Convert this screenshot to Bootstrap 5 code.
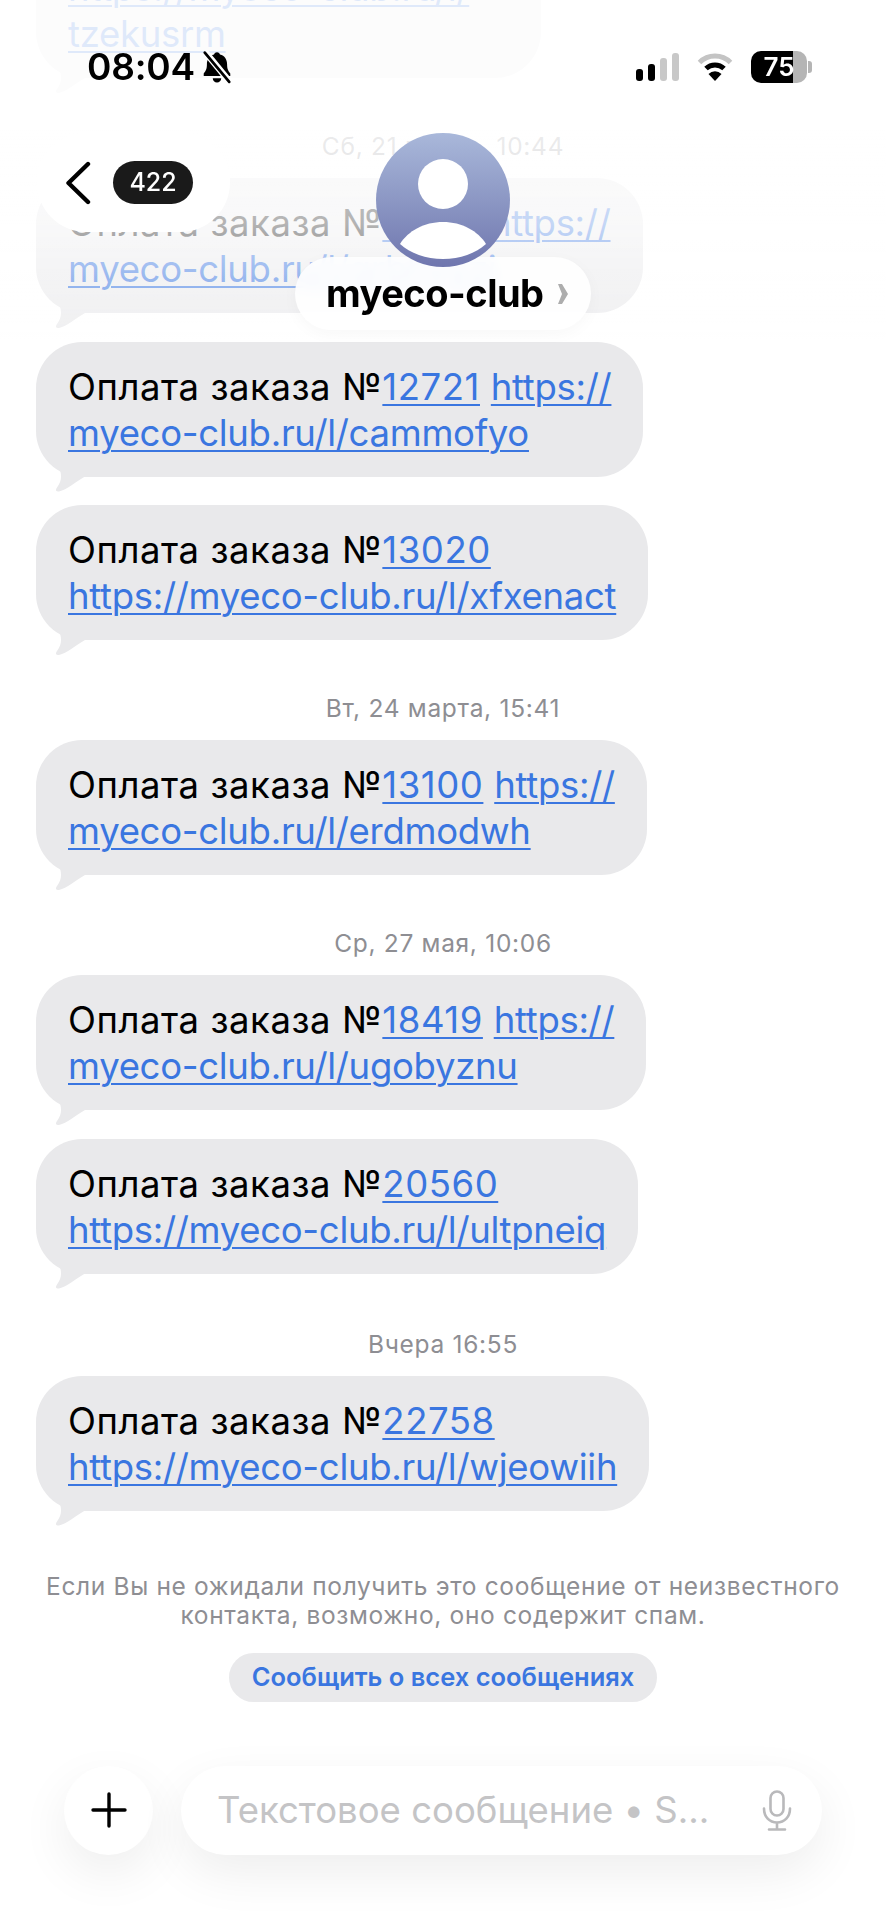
<!DOCTYPE html>
<html lang="ru">
<head>
  <meta charset="UTF-8" />
  <meta name="viewport" content="width=device-width, initial-scale=1.0" />
  <title>myeco-club</title>
  <link href="https://cdn.jsdelivr.net/npm/bootstrap@5.3.2/dist/css/bootstrap.min.css" rel="stylesheet" />
  <style>
    body {
      background-color: #fff;
      font-family: Inter, "Noto Sans", sans-serif;
      height: 1920px;
      overflow: hidden;
      color: #000;
    }

    .thread {
      margin-top: -103px;
      padding: 0 36px;
    }

    .sms {
      position: relative;
      background-color: #e9e9eb;
      border-radius: 46px;
      padding: 22px 32px 21px 32px;
      font-size: 36.5px;
      line-height: 46px;
      letter-spacing: 0.55px;
      white-space: nowrap;
      margin-bottom: 28.5px;
    }

    .sms::after {
      content: "";
      position: absolute;
      left: 15px;
      bottom: -16px;
      width: 40px;
      height: 27px;
      background-color: #e9e9eb;
      clip-path: path("M8 0 C10 8 12 14 6 22 C4 25 5 26 8 26 C16 24 24 17 34 11 L34 0 Z");
    }

    .sms a {
      color: #3a76e0;
      text-decoration: underline;
      text-underline-offset: 4px;
      text-decoration-thickness: 2px;
    }

    .sms a.url { letter-spacing: -0.3px; }

    .sms-wide { width: 505px; }

    .stamp {
      color: #8e8e93;
      font-size: 24.5px;
      letter-spacing: 0.7px;
      line-height: 32px;
      margin-top: 52px;
      margin-bottom: 16px;
    }

    .stamp-last { margin-top: 54px; }

    .notice {
      color: #8e8e93;
      font-size: 24.5px;
      line-height: 29px;
      margin-top: 61px;
      letter-spacing: 0.65px;
    }

    .report-btn {
      background-color: #e9e9eb;
      color: #3a76e0;
      font-size: 25.5px;
      font-weight: 600;
      height: 49px;
      width: 428px;
      padding: 0;
      margin-top: 23px;
      border: 0;
    }

    .composer {
      padding: 0 64px;
      margin-top: 64px;
      gap: 28px;
    }

    .plus-btn {
      width: 89px;
      height: 89px;
      flex: none;
      background-color: #fff;
      box-shadow: 0 18px 50px rgba(0, 0, 0, 0.07);
    }

    .text-field {
      height: 89px;
      padding: 0 30px 0 36px;
      background-color: #fff;
      box-shadow: 0 18px 50px rgba(0, 0, 0, 0.07);
      color: #c4c4c6;
      font-size: 36.5px;
    }

    .fade-top {
      position: absolute;
      top: 0;
      left: 0;
      width: 100%;
      height: 340px;
      backdrop-filter: blur(0.6px);
      background: linear-gradient(180deg, rgba(255,255,255,.84) 0, rgba(255,255,255,.84) 130px, rgba(255,255,255,.7) 225px, rgba(255,255,255,.48) 280px, rgba(255,255,255,.35) 325px, rgba(255,255,255,0) 340px);
    }

    .top-bar {
      position: absolute;
      top: 0;
      left: 0;
      width: 100%;
    }

    .status-row {
      height: 133px;
      padding: 0 74px 0 87px;
    }

    .clock {
      font-size: 37px;
      font-weight: 600;
      line-height: 1;
      letter-spacing: -0.2px;
    }

    .status-icons { gap: 18px; }

    .signal {
      gap: 5px;
      height: 28px;
    }

    .signal i {
      display: block;
      width: 7px;
      border-radius: 3px;
      background-color: #000;
    }

    .signal i.off { background-color: #c8c8c8; }

    .battery {
      position: relative;
      width: 56px;
      height: 32px;
      border-radius: 10px;
      background: linear-gradient(90deg, #000 75%, #b5b5b5 75%);
      color: #fff;
      font-size: 26px;
      font-weight: 600;
      line-height: 32px;
      margin-right: 5px;
    }

    .battery::after {
      content: "";
      position: absolute;
      left: 57px;
      top: 10px;
      width: 4px;
      height: 12px;
      border-radius: 0 3px 3px 0;
      background-color: #b5b5b5;
    }

    .nav-grid {
      display: grid;
      grid-template-columns: 1fr auto 1fr;
    }

    .back-pill {
      margin-left: 37px;
      width: 193px;
      height: 99px;
      background-color: #fff;
      border-radius: 50px;
      padding-left: 28px;
      gap: 22px;
    }

    .count-pill {
      width: 80px;
      height: 43px;
      background-color: #1a1a1a;
      color: #fff;
      font-size: 25px;
      font-weight: 500;
    }

    .avatar-pic {
      position: relative;
      z-index: 2;
    }

    .name-pill {
      position: relative;
      margin-top: -10px;
      height: 73px;
      width: 296px;
      padding-left: 31px;
      gap: 13px;
      font-size: 38px;
      font-weight: 700;
      letter-spacing: -0.5px;
      background-color: rgba(255, 255, 255, 0.88);
      box-shadow: 0 4px 16px rgba(0, 0, 0, 0.03);
      backdrop-filter: blur(6px);
    }
  </style>
</head>
<body>
  <div class="thread d-flex flex-column align-items-start">
    <div class="sms sms-wide mb-0">Оплата заказа №<a href="#">12047</a><br><a class="url" href="#">https://myeco-club.ru/l/</a><br><a class="url" href="#">tzekusrm</a></div>
    <div class="stamp w-100 text-center">Сб, 21 марта, 10:44</div>
    <div class="sms">Оплата заказа №<a href="#">12771</a> <a class="url" href="#">https://</a><br><a class="url" href="#">myeco-club.ru/l/qrbhvyzi</a></div>
    <div class="sms">Оплата заказа №<a href="#">12721</a> <a class="url" href="#">https://</a><br><a class="url" href="#">myeco-club.ru/l/cammofyo</a></div>
    <div class="sms mb-0">Оплата заказа №<a href="#">13020</a><br><a class="url" href="#">https://myeco-club.ru/l/xfxenact</a></div>
    <div class="stamp w-100 text-center">Вт, 24 марта, 15:41</div>
    <div class="sms mb-0">Оплата заказа №<a href="#">13100</a> <a class="url" href="#">https://</a><br><a class="url" href="#">myeco-club.ru/l/erdmodwh</a></div>
    <div class="stamp w-100 text-center">Ср, 27 мая, 10:06</div>
    <div class="sms">Оплата заказа №<a href="#">18419</a> <a class="url" href="#">https://</a><br><a class="url" href="#">myeco-club.ru/l/ugobyznu</a></div>
    <div class="sms mb-0">Оплата заказа №<a href="#">20560</a><br><a class="url" href="#">https://myeco-club.ru/l/ultpneiq</a></div>
    <div class="stamp stamp-last w-100 text-center">Вчера 16:55</div>
    <div class="sms mb-0">Оплата заказа №<a href="#">22758</a><br><a class="url" href="#">https://myeco-club.ru/l/wjeowiih</a></div>
  </div>

  <div class="d-flex flex-column align-items-center">
    <div class="notice text-center">Если Вы не ожидали получить это сообщение от неизвестного<br>контакта, возможно, оно содержит спам.</div>
    <button type="button" class="btn report-btn rounded-pill">Сообщить о всех сообщениях</button>
  </div>

  <div class="composer d-flex">
    <div class="plus-btn rounded-circle d-flex align-items-center justify-content-center">
      <svg width="36" height="36" viewBox="0 0 36 36"><path d="M18 2v32M2 18h32" stroke="#000" stroke-width="3.4" stroke-linecap="round" fill="none"/></svg>
    </div>
    <div class="text-field rounded-pill flex-grow-1 d-flex align-items-center justify-content-between">
      <span>Текстовое сообщение • S...</span>
      <svg width="30" height="41" viewBox="0 0 30 41" fill="none" stroke="#b9b9bb" stroke-width="2.6" stroke-linecap="round">
        <rect x="8.5" y="1.5" width="13" height="24" rx="6.5"/>
        <path d="M2 18.5c0 8.5 5.5 14 13 14s13-5.500 13-14M15 32.500v7M7 39.500h16"/>
      </svg>
    </div>
  </div>

  <div class="fade-top"></div>

  <div class="top-bar">
    <div class="status-row d-flex align-items-center justify-content-between">
      <div class="d-flex align-items-center gap-1">
        <span class="clock">08:04</span>
        <svg width="36" height="34" viewBox="0 0 32 32">
          <path d="M16 2c1.500 0 2.600 1 2.800 2.300 4.500 1.100 6.700 4.800 6.700 9.200 0 4.500 1.200 6.500 3 8.500v2.500H3.500V22c1.800-2 3-4 3-8.500 0-4.400 2.200-8.100 6.700-9.200C13.400 3 14.500 2 16 2zM12 26.500h8c0 2.300-1.800 4-4 4s-4-1.700-4-4z" fill="#000"/>
          <path d="M5 2l23 28" stroke="#fff" stroke-width="6"/>
          <path d="M4.500 2.500l23 27.500" stroke="#000" stroke-width="2.600" stroke-linecap="round"/>
        </svg>
      </div>
      <div class="status-icons d-flex align-items-center">
        <div class="signal d-flex align-items-end">
          <i style="height: 12px"></i>
          <i style="height: 17px"></i>
          <i class="off" style="height: 23px"></i>
          <i class="off" style="height: 28px"></i>
        </div>
        <svg width="36" height="28" viewBox="0 0 36 28" fill="none">
          <path d="M2.500 9.500a22 22 0 0 1 31 0" stroke="#c4c4c4" stroke-width="5"/>
          <path d="M9 15.500a13 13 0 0 1 18 0" stroke="#000" stroke-width="5"/>
          <path d="M18 28l-6.500-7a9 9 0 0 1 13 0z" fill="#000"/>
        </svg>
        <div class="battery text-center">75</div>
      </div>
    </div>

    <div class="nav-grid">
      <div class="back-pill d-flex align-items-center">
        <svg width="26" height="44" viewBox="0 0 26 44" fill="none"><path d="M23 3L3.500 22 23 41" stroke="#000" stroke-width="4.400" stroke-linecap="round" stroke-linejoin="round"/></svg>
        <div class="count-pill rounded-pill d-flex align-items-center justify-content-center">422</div>
      </div>
      <div class="d-flex flex-column align-items-center">
        <svg class="avatar-pic" width="134" height="134" viewBox="0 0 134 134">
          <defs>
            <linearGradient id="avatarFill" x1="0" y1="0" x2="0" y2="1">
              <stop offset="0" stop-color="#a9b8da"/>
              <stop offset="1" stop-color="#6f76ae"/>
            </linearGradient>
          </defs>
          <circle cx="67" cy="67" r="67" fill="url(#avatarFill)"/>
          <circle cx="67" cy="51" r="25" fill="#fff"/>
          <path d="M24 111c8-13 24-22 43-22s35 9 43 22c-10 9-26 15-43 15s-33-6-43-15z" fill="#fff"/>
        </svg>
        <div class="name-pill rounded-pill d-flex align-items-center">
          <span>myeco-club</span>
          <svg width="12" height="20" viewBox="0 0 12 20"><path d="M1 0h4l6 10-6 10H1l4-10z" fill="#adadad"/></svg>
        </div>
      </div>
      <div></div>
    </div>
  </div>

  <script src="https://cdn.jsdelivr.net/npm/bootstrap@5.3.2/dist/js/bootstrap.bundle.min.js"></script>
</body>
</html>
